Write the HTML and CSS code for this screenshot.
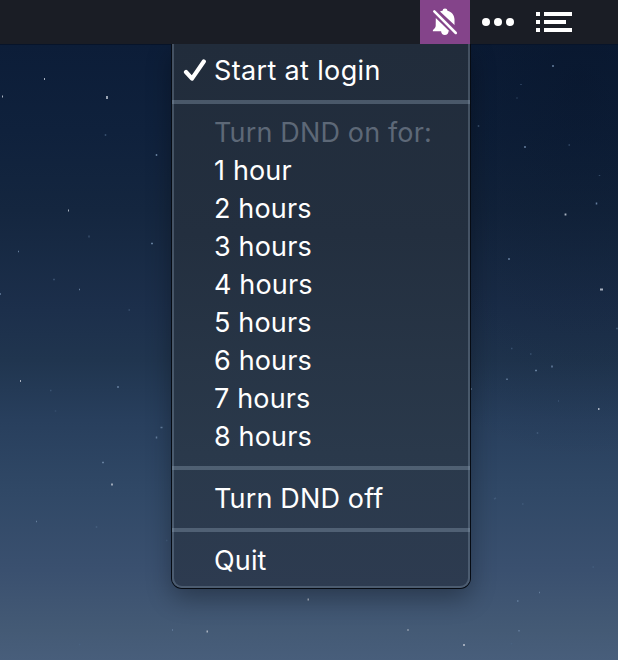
FILE: index.html
```html
<!DOCTYPE html>
<html lang="en">
<head>
<meta charset="utf-8">
<title>Menu bar</title>
<link rel="stylesheet" href="styles.css">
</head>
<body>
<svg class="sky" viewBox="0 0 618 660" aria-hidden="true">
  <g class="stars bright">
    <path d="M44 79h1M2 96.5h1M107 96v3M68 210.500h1M20 381h1M112 483.500v2M565.500 213.500v2M600 289.500h3M598 409h1.500M464 644v2M206.500 631.500h1.500M307.500 599.500h1.500M407.500 630h1"/>
  </g>
  <g class="stars medium">
    <path d="M156.500 154v2M18 251.500h1M151 243.500h2M79 289.500h1M0 294h1M118 386v2M160.500 427.500h2M156.500 436.500v2M102 462.500h2M36 521.500h1M525 146v2M509 258v2M539 592.500h1M517 601h1.500M596.500 202.500v2M552 365.500v2M535 370.500h2M507 378.500v1.500M172 630h1M553 65v2M519 630v1.500M471 389h1"/>
  </g>
  <g class="stars dim">
    <path d="M105.500 134v2M89 235.500v2M53 279.500h2M128.500 310h1.500M50 390.500h1.500M55.500 410.500v1M96.500 526v2M166 540.500h1.500M79 644.500h1.500M521 84v1M517 97.500v1M478.500 125v2M568.500 145h1.500M599.500 175v1M616 328.500h2M511 348.500h1.500M530 354h1.500M558 401h1M537.500 432v2M494 499l2-1M522 504h1.500M592.500 567h1.500M511.500 643v1.500"/>
  </g>
</svg>
<header class="menubar">
  <span class="status active">
    <svg width="50" height="44" viewBox="0 0 50 44">
      <g fill="#fff">
        <path d="M25 8.500a2.500 2.500 0 0 1 2.500 2.300c4.200 1 6.800 4.100 7 8.500v5.700L20 11.500c.8-.4 1.500-.6 2.500-.8A2.500 2.500 0 0 1 25 8.500z"/>
        <path d="M15.800 18L29.500 31.300h-1c0 2.200-1.500 3.700-3.700 3.700s-3.600-1.500-3.700-3.700h-8.300c.2-2.800 2.700-2.200 2.900-5.500z"/>
      </g>
      <path d="M14.300 11.300L35.800 33" stroke="#84448a" stroke-width="6"/>
      <path d="M14.300 11.300L35.800 33" stroke="#fff" stroke-width="2.500" stroke-linecap="round"/>
    </svg>
  </span>
  <span class="status dots"><i></i><i></i><i></i></span>
  <svg class="list" width="36" height="20" viewBox="0 0 36 20" fill="#fff">
    <path d="M0 0h4v4H0zM8 0h28v4H8zM0 8h4v4H0zM8 8h22v4H8zM0 16h4v4H0zM8 16h28v4H8z"/>
  </svg>
</header>
<main class="menu">
  <div class="item checked">
    <svg class="check" width="24" height="24" viewBox="0 0 24 24"><path d="M3 13L9 19.600L20.800 2.500" fill="none" stroke="#fff" stroke-width="4.200" stroke-linecap="round" stroke-linejoin="round"/></svg>
    <span>Start at login</span>
  </div>
  <hr>
  <div class="item disabled">Turn DND on for:</div>
  <div class="item">1 hour</div>
  <div class="item">2 hours</div>
  <div class="item">3 hours</div>
  <div class="item">4 hours</div>
  <div class="item">5 hours</div>
  <div class="item">6 hours</div>
  <div class="item">7 hours</div>
  <div class="item">8 hours</div>
  <hr>
  <div class="item">Turn DND off</div>
  <hr>
  <div class="item">Quit</div>
</main>
</body>
</html>
```
FILE: styles.css
```css
* { box-sizing: border-box; }
body {
  margin: 0;
  width: 618px;
  height: 660px;
  overflow: hidden;
  position: relative;
  font-family: Inter, "Liberation Sans", sans-serif;
  background:
    radial-gradient(ellipse 280px 380px at 580px 80px, rgba(3, 14, 32, 0.35), transparent),
    linear-gradient(180deg, #0c1d38 44px, #0f213c 130px, #14263f 210px, #1c2f4b 310px, #20354f 360px, #283f5d 420px, #304866 490px, #3a506f 570px, #445a75 630px, #485e7b 660px);
}
.sky { position: absolute; inset: 0; width: 618px; height: 660px; }
.stars { fill: none; stroke-width: 1.5; }
.bright { stroke: #a9b2c0; stroke-width: 1.8; }
.medium { stroke: #647e9d; }
.dim { stroke: #4b6685; opacity: 0.6; }

.menubar {
  position: relative;
  display: flex;
  align-items: center;
  height: 44px;
  padding-left: 420px;
  background: #1a1d25;
  box-shadow: 0 1px 0 #07142a;
}
.status { display: flex; align-items: center; height: 44px; }
.active { width: 50px; background: #84448a; }
.dots { gap: 4px; margin-left: 12px; }
.dots i { width: 8px; height: 8px; border-radius: 50%; background: #fff; }
.list { margin-left: 22px; }

.menu {
  position: relative;
  width: 298px;
  height: 544px;
  margin-left: 172px;
  padding: 8px 0;
  border-radius: 0 0 10px 10px;
  background: linear-gradient(180deg, #212c3b, #232f3f 35%, #2a394b 75%, #2d3b50);
  box-shadow: 0 0 0 1px #060b13, 0 10px 26px rgba(0, 0, 0, 0.32);
  clip-path: inset(0 -60px -60px -60px);
}
.menu::after {
  content: "";
  position: absolute;
  inset: 0;
  border: 2px solid rgba(150, 170, 190, 0.3);
  border-top: 0;
  border-radius: inherit;
}
.item {
  display: flex;
  align-items: center;
  height: 38px;
  padding-left: 42px;
  color: #fff;
  font-size: 27px;
  line-height: 38px;
  letter-spacing: 0.15px;
  white-space: pre;
}
.checked { padding-left: 11px; letter-spacing: 0.35px; }
.check { width: 24px; margin-right: 7px; }
.disabled { color: #5d6877; }
hr { height: 4px; margin: 10px 0; border: 0; background: rgba(150, 170, 190, 0.35); }
```
